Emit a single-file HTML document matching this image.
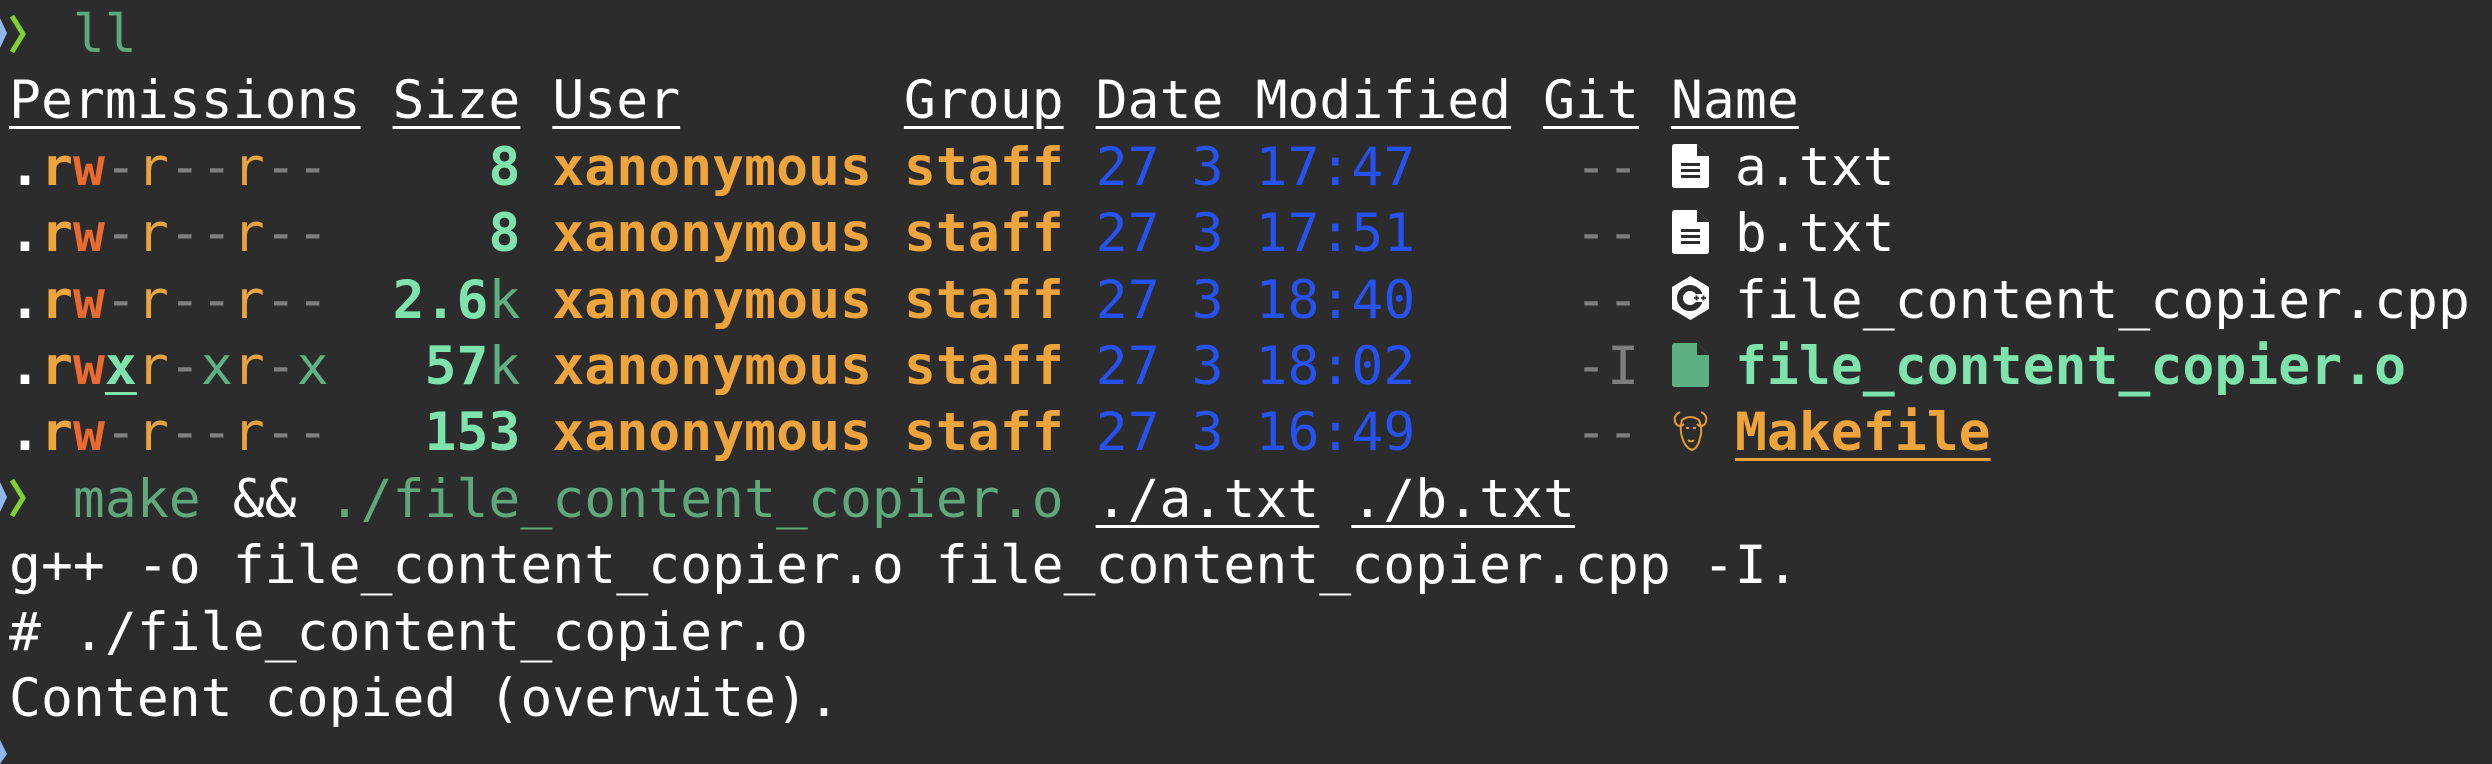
<!DOCTYPE html>
<html><head><meta charset="utf-8"><style>
html,body{margin:0;padding:0;background:#2c2c2c;width:2492px;height:764px;overflow:hidden}
.r{position:absolute;left:9px;height:66.4px;line-height:66.4px;font-family:"DejaVu Sans Mono","Liberation Mono",monospace;font-size:53px;white-space:pre;color:#fff;letter-spacing:0.05px;margin-top:3px}
b{font-weight:bold}
.u{text-decoration:underline;text-decoration-thickness:3px;text-underline-offset:8px}
.o{color:#f0a43c}.rd{color:#ea6a30}.g{color:#7e7e7e}.sz{color:#7ee3ac}.k{color:#5fb083}
.bl{color:#2752f2}.y{color:#e9a440}.gx{color:#5fb083}.cm{color:#5fa87c}
.ic{position:absolute;width:37px;height:44px}
</style></head><body>
<svg style="position:absolute;left:0;top:8px" width="44" height="52"><path d="M0 10 L7 25 L0 40 Z" fill="#8fb8f0"/><path d="M12 8 L23 26 L12 44" stroke="#7fd032" stroke-width="5" fill="none"/></svg>
<div class="r" style="top:-1px">  <span class="cm">ll</span></div>
<div class="r" style="top:65.4px"><span class="u">Permissions</span> <span class="u">Size</span> <span class="u">User</span>       <span class="u">Group</span> <span class="u">Date Modified</span> <span class="u">Git</span> <span class="u">Name</span></div>
<div class="r" style="top:131.8px"><b>.</b><b class="o">r</b><b class="rd">w</b><span class="g">-</span><span class="y">r</span><span class="g">--</span><span class="y">r</span><span class="g">--</span>     <b class="sz">8</b> <b class="o">xanonymous</b> <b class="o">staff</b> <span class="bl">27 3 17:47</span>     <span class="g">--</span>   a.txt</div>
<div class="r" style="top:198.2px"><b>.</b><b class="o">r</b><b class="rd">w</b><span class="g">-</span><span class="y">r</span><span class="g">--</span><span class="y">r</span><span class="g">--</span>     <b class="sz">8</b> <b class="o">xanonymous</b> <b class="o">staff</b> <span class="bl">27 3 17:51</span>     <span class="g">--</span>   b.txt</div>
<div class="r" style="top:264.6px"><b>.</b><b class="o">r</b><b class="rd">w</b><span class="g">-</span><span class="y">r</span><span class="g">--</span><span class="y">r</span><span class="g">--</span>  <b class="sz">2.6</b><span class="k">k</span> <b class="o">xanonymous</b> <b class="o">staff</b> <span class="bl">27 3 18:40</span>     <span class="g">--</span>   file_content_copier.cpp</div>
<div class="r" style="top:331px"><b>.</b><b class="o">r</b><b class="rd">w</b><b class="sz u">x</b><span class="y">r</span><span class="g">-</span><span class="gx">x</span><span class="y">r</span><span class="g">-</span><span class="gx">x</span>   <b class="sz">57</b><span class="k">k</span> <b class="o">xanonymous</b> <b class="o">staff</b> <span class="bl">27 3 18:02</span>     <span class="g">-I</span>   <b class="sz">file_content_copier.o</b></div>
<div class="r" style="top:397.4px"><b>.</b><b class="o">r</b><b class="rd">w</b><span class="g">-</span><span class="y">r</span><span class="g">--</span><span class="y">r</span><span class="g">--</span>   <b class="sz">153</b> <b class="o">xanonymous</b> <b class="o">staff</b> <span class="bl">27 3 16:49</span>     <span class="g">--</span>   <b class="o u">Makefile</b></div>
<svg style="position:absolute;left:0;top:472px" width="44" height="52"><path d="M0 10 L7 25 L0 40 Z" fill="#8fb8f0"/><path d="M12 8 L23 26 L12 44" stroke="#7fd032" stroke-width="5" fill="none"/></svg>
<div class="r" style="top:463.8px">  <span class="cm">make</span> &amp;&amp; <span class="cm">./file_content_copier.o</span> <span class="u">./a.txt</span> <span class="u">./b.txt</span></div>
<div class="r" style="top:530.2px">g++ -o file_content_copier.o file_content_copier.cpp -I.</div>
<div class="r" style="top:596.6px"># ./file_content_copier.o</div>
<div class="r" style="top:663px">Content copied (overwite).</div>
<svg style="position:absolute;left:0;top:740px" width="10" height="24"><path d="M0 0 L7 14 L0 24 Z" fill="#8fb8f0"/></svg>
<svg class="ic" style="left:1672px;top:144px" viewBox="0 0 37 44"><path d="M3 0 H25 L37 12 V41 Q37 44 34 44 H3 Q0 44 0 41 V3 Q0 0 3 0Z" fill="#fff"/><path d="M25 0 V12 H37" fill="#2c2c2c"/><rect x="9" y="19" width="19" height="3" fill="#2c2c2c"/><rect x="9" y="25" width="19" height="3" fill="#2c2c2c"/><rect x="9" y="31" width="19" height="3" fill="#2c2c2c"/></svg>
<svg class="ic" style="left:1672px;top:210px" viewBox="0 0 37 44"><path d="M3 0 H25 L37 12 V41 Q37 44 34 44 H3 Q0 44 0 41 V3 Q0 0 3 0Z" fill="#fff"/><path d="M25 0 V12 H37" fill="#2c2c2c"/><rect x="9" y="19" width="19" height="3" fill="#2c2c2c"/><rect x="9" y="25" width="19" height="3" fill="#2c2c2c"/><rect x="9" y="31" width="19" height="3" fill="#2c2c2c"/></svg>
<svg class="ic" style="left:1672px;top:276px" viewBox="0 0 37 44"><path d="M18.5 0 L37 11 V33 L18.5 44 L0 33 V11 Z" fill="#fff"/><circle cx="18" cy="22" r="10" fill="none" stroke="#2c2c2c" stroke-width="6"/><rect x="19" y="18" width="12" height="8" fill="#fff"/><path d="M22 22h5M24.5 19.5v5M29 22h5M31.5 19.5v5" stroke="#2c2c2c" stroke-width="1.8"/></svg>
<svg class="ic" style="left:1672px;top:343px" viewBox="0 0 37 44"><path d="M3 0 H25 L37 12 V41 Q37 44 34 44 H3 Q0 44 0 41 V3 Q0 0 3 0Z" fill="#5db083"/><path d="M25 0 V12 H37" fill="#2c2c2c"/></svg>
<svg class="ic" style="left:1672px;top:408px" viewBox="0 0 37 44" fill="none" stroke="#e39a35" stroke-width="2"><path d="M8 4 Q0 8 4 16 Q8 20 12 16"/><path d="M29 4 Q37 8 33 16 Q29 20 25 16"/><path d="M10 12 Q18 6 27 12 Q31 22 28 30 Q26 40 20 42 Q14 40 11 32 Q7 22 10 12Z"/><path d="M14 20h3M21 20h3M16 32 Q19 35 22 32"/></svg>
</body></html>
